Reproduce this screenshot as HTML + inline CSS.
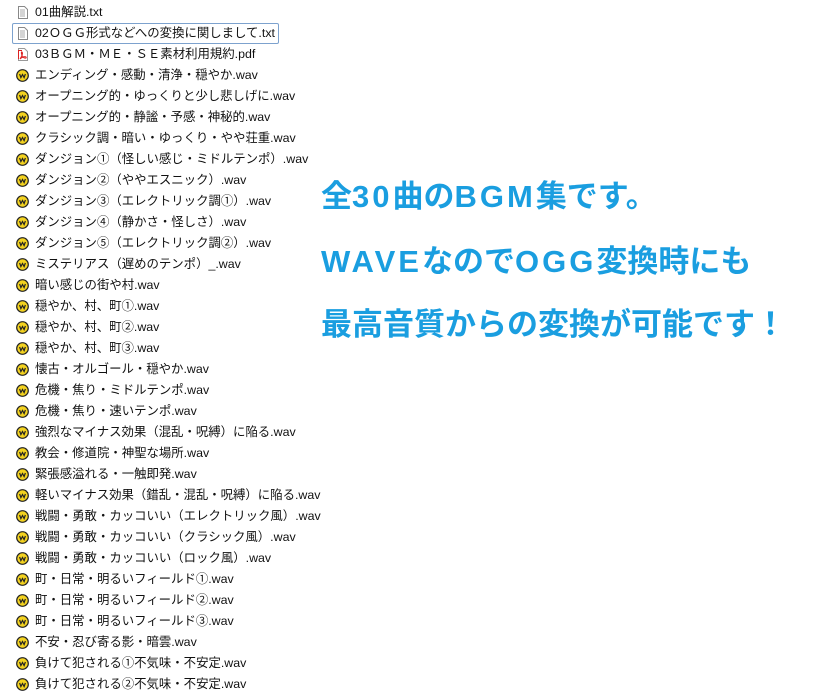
<!DOCTYPE html>
<html><head><meta charset="utf-8"><style>
body{margin:0;width:817px;height:699px;background:#fff;overflow:hidden;position:relative;font-family:"Liberation Sans","Noto Sans CJK JP",sans-serif;}
.r{position:absolute;left:0;height:21px;line-height:21px;font-size:12.4px;color:#111;white-space:nowrap;}
.r span{position:absolute;left:35px;top:0}
.ic{position:absolute;left:16px;top:4px;width:13px;height:13px}
.sel{position:absolute;left:12px;top:23px;width:265px;height:19px;border:1px solid #7da2ce;border-radius:2px}
.big{position:absolute;left:321px;font-size:31px;font-weight:bold;color:#1a9ee0;letter-spacing:0;white-space:nowrap;line-height:36px;font-family:"Liberation Sans","Noto Sans CJK JP",sans-serif}
.big b{letter-spacing:3px}
</style></head><body>
<div class="sel"></div>
<div class="big" style="top:179px">全<b>30</b>曲の<b>BGM</b>集です。</div>
<div class="big" style="top:244px"><b>WAVE</b>なので<b>OGG</b>変換時にも</div>
<div class="big" style="top:307px">最高音質からの変換が可能です！</div>
<div id="list"></div>
<script>
var txt='<svg class="ic" viewBox="0 0 13 13"><path d="M2.5 0.5h6l3 3v9h-9z" fill="#fff" stroke="#888"/><path d="M4 4h5M4 6h5M4 8h5M4 10h5" stroke="#aaa"/></svg>';
var pdf='<svg class="ic" viewBox="0 0 13 13"><path d="M2.5 0.5h6l3 3v9h-9z" fill="#fff" stroke="#999"/><path d="M2 2h4v1H3v8H2z" fill="#d22"/><path d="M4 11c2-3 3-6 2-7s-1 3 1 5 4 1 3 0-4 0-6 2z" fill="none" stroke="#d22"/></svg>';
var wav='<svg class="ic" viewBox="0 0 13 13"><circle cx="6.5" cy="6.5" r="5.8" fill="#f4d320" stroke="#222" stroke-width="1.2"/><path d="M3.6 5l1.3 3.5 1.6-3 1.6 3L9.4 5" fill="none" stroke="#222" stroke-width="1.2"/></svg>';
var items=[[txt,'01曲解説.txt'],[txt,'02ＯＧＧ形式などへの変換に関しまして.txt'],[pdf,'03ＢＧＭ・ＭＥ・ＳＥ素材利用規約.pdf']];
['エンディング・感動・清浄・穏やか.wav','オープニング的・ゆっくりと少し悲しげに.wav','オープニング的・静謐・予感・神秘的.wav','クラシック調・暗い・ゆっくり・やや荘重.wav','ダンジョン①（怪しい感じ・ミドルテンポ）.wav','ダンジョン②（ややエスニック）.wav','ダンジョン③（エレクトリック調①）.wav','ダンジョン④（静かさ・怪しさ）.wav','ダンジョン⑤（エレクトリック調②）.wav','ミステリアス（遅めのテンポ）_.wav','暗い感じの街や村.wav','穏やか、村、町①.wav','穏やか、村、町②.wav','穏やか、村、町③.wav','懐古・オルゴール・穏やか.wav','危機・焦り・ミドルテンポ.wav','危機・焦り・速いテンポ.wav','強烈なマイナス効果（混乱・呪縛）に陥る.wav','教会・修道院・神聖な場所.wav','緊張感溢れる・一触即発.wav','軽いマイナス効果（錯乱・混乱・呪縛）に陥る.wav','戦闘・勇敢・カッコいい（エレクトリック風）.wav','戦闘・勇敢・カッコいい（クラシック風）.wav','戦闘・勇敢・カッコいい（ロック風）.wav','町・日常・明るいフィールド①.wav','町・日常・明るいフィールド②.wav','町・日常・明るいフィールド③.wav','不安・忍び寄る影・暗雲.wav','負けて犯される①不気味・不安定.wav','負けて犯される②不気味・不安定.wav'].forEach(function(t){items.push([wav,t])});
var h='';items.forEach(function(it,i){h+='<div class="r" style="top:'+(2+i*21)+'px">'+it[0]+'<span>'+it[1]+'</span></div>'});
document.getElementById('list').innerHTML=h;
</script>
</body></html>
